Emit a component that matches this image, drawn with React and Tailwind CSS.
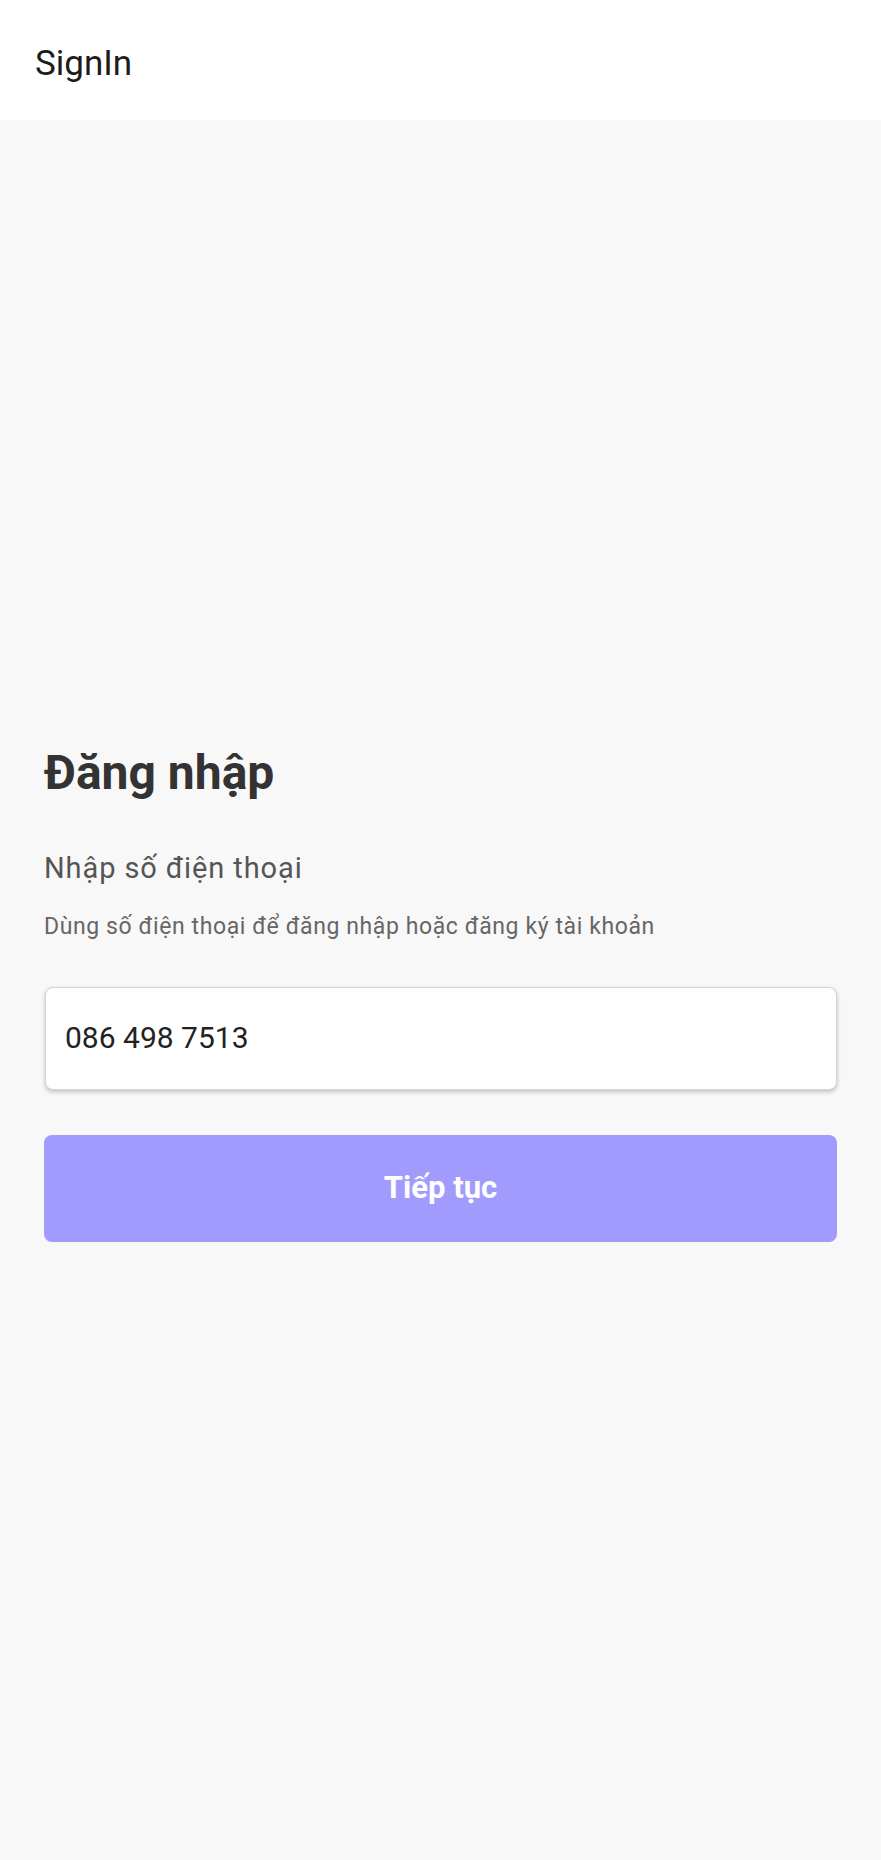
export default function App() {
  return (
    <div
      className="min-h-screen flex flex-col bg-[#f8f8f8]"
      style={{ fontFamily: "Roboto, 'Noto Sans', sans-serif" }}
    >
      <header className="h-[120px] bg-white pl-[35px] pt-[44px]">
        <h1 className="text-[35px] leading-[40px] text-[#1c1c1c] font-normal">SignIn</h1>
      </header>
      <main className="flex-1 flex flex-col justify-center px-[44px] pt-[6px]">
        <h2 className="text-[48px] leading-[56px] font-bold text-[#333333]">Đăng nhập</h2>
        <p className="mt-[50px] text-[29px] leading-[34px] tracking-[0.9px] text-[#555555]">Nhập số điện thoại</p>
        <p className="mt-[29px] text-[23px] leading-[26px] tracking-[0.6px] text-[#666666]">
          Dùng số điện thoại để đăng nhập hoặc đăng ký tài khoản
        </p>
        <div className="mt-[47px] ml-[1px] h-[103px] rounded-[8px] bg-white border border-[#d4d4d4] shadow-[0_2px_4px_rgba(0,0,0,0.22)] flex items-center px-[19px]">
          <span className="text-[30px] leading-[36px] text-[#222222]">086 498 7513</span>
        </div>
        <button className="mt-[45px] h-[107px] w-full rounded-[8px] bg-[#a29bfe] text-white text-[31px] font-bold">
          Tiếp tục
        </button>
      </main>
    </div>
  );
}
